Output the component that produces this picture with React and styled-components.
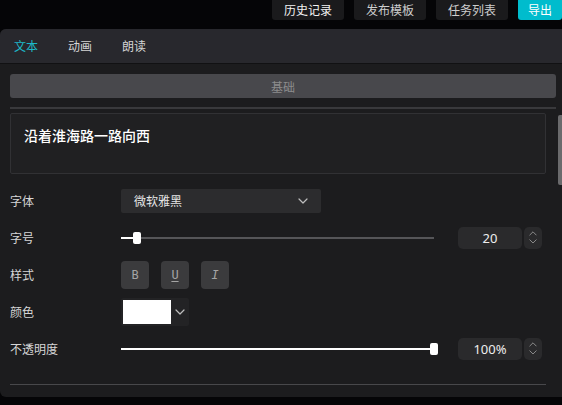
import React from 'react';
import styled, { createGlobalStyle } from 'styled-components';

const GlobalStyle = createGlobalStyle`
  html, body {
    margin: 0;
    padding: 0;
    background: #050507;
    overflow: hidden;
  }
  body {
    font-family: "Noto Sans CJK SC", "Noto Sans", sans-serif;
    color: #d8d8d8;
  }
`;

const Page = styled.div`
  width: 562px;
  height: 405px;
  display: flex;
  flex-direction: column;
`;

const TopBar = styled.div`
  height: 20px;
  display: flex;
  justify-content: flex-end;
  gap: 10px;
`;

const TopButton = styled.div`
  width: ${({ $w }) => $w || 72}px;
  height: 20px;
  display: flex;
  align-items: center;
  justify-content: center;
  font-size: 12px;
  line-height: 20px;
  border-radius: 0 0 3px 3px;
  background: ${({ $primary }) => ($primary ? '#00bccd' : '#1a1a1c')};
  color: ${({ $primary, $bright }) => ($primary ? '#ffffff' : $bright ? '#f2f2f2' : '#cdcdcd')};
`;

const Panel = styled.div`
  position: relative;
  margin-top: 9px;
  height: 368px;
  background: #1c1c1e;
  border-radius: 6px 0 0 6px;
  overflow: hidden;
  display: flex;
  flex-direction: column;
`;

const Tabs = styled.div`
  height: 34px;
  display: flex;
  align-items: center;
  gap: 30px;
  padding-left: 14px;
  background: #28282d;
  border-bottom: 1px solid #111113;
`;

const Tab = styled.div`
  font-size: 12px;
  line-height: 14px;
  color: ${({ $active }) => ($active ? '#1db8c8' : '#d4d4d4')};
`;

const Body = styled.div`
  padding: 10px 6px 0 10px;
  display: flex;
  flex-direction: column;
`;

const SectionButton = styled.div`
  height: 24px;
  border-radius: 3px;
  background: #48484c;
  color: #8c8c8c;
  font-size: 12px;
  display: flex;
  align-items: center;
  justify-content: center;
`;

const Divider = styled.div`
  height: ${({ $thick }) => ($thick ? 2 : 1)}px;
  background: ${({ $thick }) => ($thick ? '#39393c' : '#48484b')};
  margin-top: ${({ $gap }) => $gap || 0}px;
  margin-right: ${({ $inset }) => $inset || 0}px;
`;

const TextBox = styled.div`
  margin: 4px 10px 0 0;
  height: 61px;
  box-sizing: border-box;
  padding: 12px 13px 0;
  border: 1px solid #313134;
  border-radius: 2px;
  background: #202022;
  font-size: 14px;
  line-height: 18px;
  font-weight: 500;
  color: #ffffff;
`;

const Rows = styled.div`
  margin-top: 8px;
  display: flex;
  flex-direction: column;
`;

const Row = styled.div`
  height: 37px;
  display: flex;
  align-items: center;
`;

const Label = styled.div`
  width: 111px;
  font-size: 12px;
  color: #d6d6d6;
`;

const Select = styled.div`
  width: 200px;
  height: 24px;
  box-sizing: border-box;
  padding: 0 13px;
  background: #2c2c2e;
  border-radius: 2px;
  display: flex;
  align-items: center;
  justify-content: space-between;
  font-size: 12px;
  color: #e6e6e6;
`;

const Track = styled.div`
  position: relative;
  width: 313px;
  height: 2px;
  background: #555558;
`;

const Fill = styled.div`
  height: 100%;
  background: #ffffff;
`;

const Thumb = styled.div`
  position: absolute;
  top: -5px;
  width: 8px;
  height: 12px;
  margin-left: -4px;
  border-radius: 2px;
  background: #ffffff;
`;

const NumberBox = styled.div`
  margin-left: 24px;
  width: 64px;
  height: 22px;
  border-radius: 5px;
  background: #2a2a2c;
  display: flex;
  align-items: center;
  justify-content: center;
  font-family: "Noto Sans", sans-serif;
  font-size: 13px;
  color: #eeeeee;
`;

const Spinner = styled.div`
  margin-left: 2px;
  width: 18px;
  height: 22px;
  border-radius: 5px;
  background: #2a2a2c;
  display: flex;
  flex-direction: column;
  align-items: center;
  justify-content: center;
  gap: 3px;
`;

const StyleButtons = styled.div`
  display: flex;
  gap: 12px;
`;

const StyleButton = styled.div`
  width: 28px;
  height: 28px;
  border-radius: 4px;
  background: #3b3b3d;
  color: #a4a4a4;
  display: flex;
  align-items: center;
  justify-content: center;
  font-family: "DejaVu Sans Mono", monospace;
  font-size: 12px;
  font-style: ${({ $italic }) => ($italic ? 'italic' : 'normal')};
  text-decoration: ${({ $underline }) => ($underline ? 'underline' : 'none')};
  text-underline-offset: 2px;
`;

const ColorPicker = styled.div`
  width: 68px;
  height: 28px;
  box-sizing: border-box;
  padding: 2px;
  background: #232325;
  border-radius: 2px;
  display: flex;
  align-items: center;
  gap: 4px;
`;

const Swatch = styled.div`
  width: 48px;
  height: 24px;
  background: ${({ $color }) => $color};
`;

const ScrollThumb = styled.div`
  position: absolute;
  right: 0;
  top: 86px;
  width: 4px;
  height: 70px;
  border-radius: 2px 0 0 2px;
  background: #6a6a6c;
`;

const Chevron = ({ up, size = 10, color = '#bdbdbd' }) => (
  <svg width={size} height={size * 0.6} viewBox="0 0 10 6" fill="none">
    <path
      d={up ? 'M1 5L5 1L9 5' : 'M1 1L5 5L9 1'}
      stroke={color}
      strokeWidth="1.2"
      strokeLinecap="round"
      strokeLinejoin="round"
    />
  </svg>
);

const Slider = ({ value }) => (
  <Track>
    <Fill style={{ width: `${value}%` }} />
    <Thumb style={{ left: `${value}%` }} />
  </Track>
);

const NumberInput = ({ value }) => (
  <>
    <NumberBox>{value}</NumberBox>
    <Spinner>
      <Chevron up size={8} color="#8e8e8e" />
      <Chevron size={8} color="#8e8e8e" />
    </Spinner>
  </>
);

const tabs = ['文本', '动画', '朗读'];

export default function App() {
  return (
    <Page>
      <GlobalStyle />
      <TopBar>
        <TopButton $bright>历史记录</TopButton>
        <TopButton>发布模板</TopButton>
        <TopButton>任务列表</TopButton>
        <TopButton $primary $w={44}>导出</TopButton>
      </TopBar>

      <Panel>
        <Tabs>
          {tabs.map((t, i) => (
            <Tab key={t} $active={i === 0}>{t}</Tab>
          ))}
        </Tabs>

        <Body>
          <SectionButton>基础</SectionButton>
          <Divider $thick $gap={9} />
          <TextBox>沿着淮海路一路向西</TextBox>

          <Rows>
            <Row>
              <Label>字体</Label>
              <Select>
                <span>微软雅黑</span>
                <Chevron />
              </Select>
            </Row>
            <Row>
              <Label>字号</Label>
              <Slider value={5} />
              <NumberInput value="20" />
            </Row>
            <Row>
              <Label>样式</Label>
              <StyleButtons>
                <StyleButton>B</StyleButton>
                <StyleButton $underline>U</StyleButton>
                <StyleButton $italic>I</StyleButton>
              </StyleButtons>
            </Row>
            <Row>
              <Label>颜色</Label>
              <ColorPicker>
                <Swatch $color="#ffffff" />
                <Chevron />
              </ColorPicker>
            </Row>
            <Row>
              <Label>不透明度</Label>
              <Slider value={100} />
              <NumberInput value="100%" />
            </Row>
          </Rows>

          <Divider $gap={17} $inset={10} />
        </Body>

        <ScrollThumb />
      </Panel>
    </Page>
  );
}
